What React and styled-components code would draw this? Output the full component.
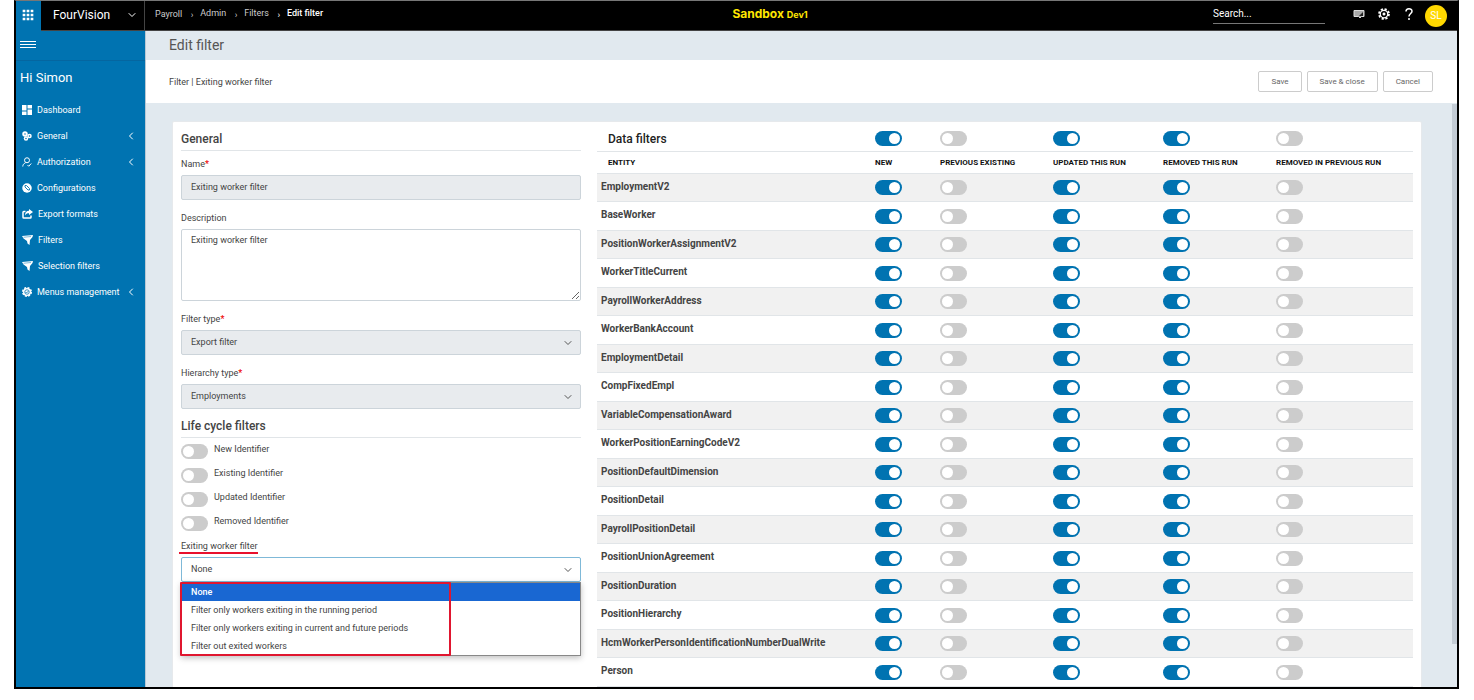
import React, { useState } from 'react'
import styled, { createGlobalStyle, css } from 'styled-components'
import { MdApps } from 'react-icons/md'
import { ChevronDown, ChevronLeft } from 'lucide-react'

const GlobalStyle = createGlobalStyle`
  * {
    box-sizing: border-box;
  }

  body {
    margin: 0;
    background: #fff;
    color: #444;
    font-family: Roboto, "Liberation Sans", sans-serif;
    font-size: 9px;
    line-height: 12px;
  }

  button, input, select, textarea {
    font: inherit;
    color: inherit;
  }
`

const Frame = styled.div`
  display: flex;
  flex-direction: column;
  height: calc(100vh - 11px);
  margin: 0 15px 0 14px;
  border: 2px solid #000;
  border-top: 1px solid #777;
  overflow: hidden;
`

const TopBar = styled.header`
  display: flex;
  flex: none;
  height: 30px;
  background: #000;
  color: #fff;
  border-bottom: 1px solid #444;
`

const AppLauncher = styled.button`
  display: flex;
  align-items: center;
  justify-content: center;
  width: 25px;
  height: 30px;
  padding: 0 2px 2px 0;
  border: 0;
  background: #0073b1;
  color: #fff;
`

const CompanyButton = styled.button`
  display: flex;
  align-items: center;
  justify-content: space-between;
  width: 104px;
  padding: 0 6px 2px 12px;
  border: 0;
  border-right: 1px solid #444;
  background: none;
  color: #fff;
  font-size: 12px;
`

const TopContent = styled.div`
  display: grid;
  grid-template-columns: 11fr 9fr auto;
  align-items: center;
  flex: 1;
`

const Crumbs = styled.nav`
  display: flex;
  align-items: center;
  padding: 0 0 3px 10px;
  color: #ccc;
`

const Crumb = styled.a`
  color: inherit;
  text-decoration: none;

  &[aria-current] {
    color: #fff;
    font-weight: 500;
  }

  & + &::before {
    content: '›';
    display: inline-block;
    width: 16px;
    padding-left: 2px;
    text-align: center;
    font-weight: 400;
    vertical-align: -2px;
  }
`

const Environment = styled.div`
  padding-bottom: 2px;
  color: #ffe600;
  font-family: Inter, sans-serif;
  font-size: 12px;
  font-weight: 700;

  small {
    font-size: 9px;
  }
`

const TopTools = styled.div`
  display: flex;
  align-items: center;
  padding-right: 10px;
`

const Search = styled.input`
  width: 112px;
  height: 18px;
  margin: 0 25px 2px 0;
  padding: 0 0 2px;
  border: 0;
  border-bottom: 1px solid #777;
  background: none;
  color: #fff;
  font-size: 10px;

  &::placeholder {
    color: #fff;
    opacity: 1;
  }
`

const ToolButton = styled.button`
  display: flex;
  align-items: center;
  justify-content: center;
  width: 18px;
  height: 18px;
  margin-right: 7px;
  padding: 0 0 3px;
  border: 0;
  background: none;
  color: #fff;
`

const Avatar = styled.div`
  width: 22px;
  height: 22px;
  border-radius: 50%;
  background: #ffd800;
  color: #fff;
  font-size: 10px;
  line-height: 22px;
  text-align: center;
`

const Body = styled.div`
  display: flex;
  flex: 1;
  min-height: 0;
`

const Sidebar = styled.aside`
  flex: none;
  width: 130px;
  background: #0073b1;
  border-right: 1px solid #b9c8d4;
  color: #fff;
`

const MenuToggle = styled.button`
  display: block;
  width: 100%;
  height: 30px;
  padding: 0 4px;
  border: 0;
  border-bottom: 1px solid #0566a0;
  background: none;
  color: #fff;
  text-align: left;
`

const Greeting = styled.div`
  padding: 9px 4px 11px;
  font-size: 13px;
  line-height: 16px;
`

const MenuLink = styled.a`
  display: flex;
  align-items: center;
  height: 26px;
  padding: 0 8px 0 6px;
  color: #fff;
  text-decoration: none;

  svg:first-child {
    flex: none;
    margin-right: 5px;
  }

  span {
    flex: 1;
    white-space: nowrap;
  }
`

const Main = styled.main`
  display: flex;
  flex-direction: column;
  flex: 1;
  min-width: 0;
`

const PageTitle = styled.h1`
  flex: none;
  margin: 0;
  padding: 0 23px;
  background: #e1e9ef;
  color: #555;
  font-size: 14px;
  font-weight: 400;
  line-height: 29px;
`

const ActionBar = styled.div`
  display: flex;
  align-items: center;
  flex: none;
  gap: 5px;
  height: 43px;
  padding: 0 24px 0 23px;
  background: #fff;
`

const RecordName = styled.div`
  flex: 1;
`

const ActionButton = styled.button`
  height: 21px;
  padding: 0 12px;
  border: 1px solid #ccc;
  border-radius: 2px;
  background: #fff;
  color: #666;
  font-size: 8px;
`

const Content = styled.div`
  display: flex;
  align-items: flex-start;
  flex: 1;
  min-height: 0;
  padding: 18px 0 0 26px;
  background: #e1e9ef;
  overflow: hidden;
`

const Card = styled.div`
  display: grid;
  grid-template-columns: 25fr 51fr;
  gap: 16px;
  flex: 1;
  padding: 0 8px;
  background: #fff;
  border: 1px solid #e6e9ec;
  border-radius: 2px 2px 0 0;
`

const ScrollTrack = styled.div`
  flex: none;
  width: 35px;
  height: 540px;
  margin-top: -17px;
  border-right: 5px solid #c3ccd5;
`

const Form = styled.form`
  min-width: 0;
`

const SectionTitle = styled.h2`
  height: 29px;
  margin: 0;
  padding-top: 9px;
  border-bottom: 1px solid #e1e5e8;
  font-size: 12px;
  font-weight: 500;
  line-height: 16px;
`

const Field = styled.div`
  position: relative;
  display: flex;
  flex-direction: column;
  align-items: flex-start;
  gap: 5px;
  padding-top: ${props => props.$top || '12px'};
`

const Label = styled.label`
  ${props => props.$marked && css`
    margin: 0 0 -2px -2px;
    padding-left: 2px;
    border-bottom: 2px solid #e8112d;
  `}

  b {
    color: #e00;
    font-weight: 500;
  }
`

const control = css`
  width: 100%;
  height: 25px;
  padding: 0 9px 2px;
  border: 1px solid #ccd4da;
  border-radius: 2px;
  background: #fff;
  color: #444;

  &:disabled {
    background: #e8ebee;
    opacity: 1;
  }
`

const TextInput = styled.input`
  ${control}
`

const TextArea = styled.textarea`
  ${control}
  display: block;
  height: 72px;
  padding: 4px 9px;
`

const SelectWrapper = styled.div`
  position: relative;
  width: 100%;

  svg {
    position: absolute;
    top: 7px;
    right: 7px;
    pointer-events: none;
  }
`

const Select = styled.select`
  ${control}
  display: block;
  appearance: none;
  border-color: ${props => props.$open ? '#7fb9d8' : '#ccd4da'};
`

const LifeCycle = styled.div`
  padding-top: 3px;
`

const LifeCycleRow = styled.label`
  display: flex;
  gap: 6px;
  height: 24px;
  padding-top: 1px;
  line-height: 14px;

  input {
    margin-top: 2px;
  }
`

const Toggle = styled.input`
  display: block;
  flex: none;
  appearance: none;
  width: 27px;
  height: 15px;
  margin: 0;
  padding: 2px;
  border-radius: 8px;
  background: #ccc;

  &::before {
    content: '';
    display: block;
    width: 11px;
    height: 11px;
    border-radius: 50%;
    background: #fff;
  }

  &:checked {
    background: #0073b1;
  }

  &:checked::before {
    margin-left: 12px;
  }
`

const Options = styled.ul`
  position: absolute;
  top: 100%;
  left: 0;
  right: 0;
  margin: 0;
  padding: 0;
  border: 1px solid #888;
  background: #fff;
  box-shadow: 0 2px 6px rgba(0, 0, 0, 0.25);
  list-style: none;
`

const Option = styled.li`
  height: 18px;
  padding: 0 9px;
  line-height: 18px;

  &[aria-selected='true'] {
    background: #1967d2;
    color: #fff;
    font-weight: 500;
  }
`

const Highlight = styled.div`
  position: absolute;
  inset: -1px auto -1px -2px;
  width: 68%;
  border: 2px solid #e0162f;
  border-radius: 1px;
  pointer-events: none;
`

const Table = styled.table`
  width: 100%;
  border-collapse: separate;
  border-spacing: 0;
  table-layout: fixed;

  th, td {
    padding: 0;
    border-bottom: 1px solid #e1e5e8;
    text-align: left;
    white-space: nowrap;
  }
`

const Col = styled.col`
  width: ${props => props.$width};
`

const TitleRow = styled.tr`
  height: 30px;

  th:first-child {
    padding: 4px 0 0 11px;
    color: #222;
    font-size: 12px;
    font-weight: 500;
  }

  input {
    margin-top: 3px;
  }
`

const HeadRow = styled.tr`
  height: 22px;
  color: #111;
  font-size: 8px;

  th {
    font-weight: 700;
  }

  th:first-child {
    padding-left: 11px;
  }
`

const EntityRow = styled.tr`
  height: 28px;

  &:nth-child(even) {
    height: 29px;
  }

  &:nth-child(odd) {
    background: #f1f1f1;
  }

  th {
    padding: 0 0 2px 4px;
    font-size: 10px;
    font-weight: 700;
  }
`

const DashboardIcon = () => (
    <svg width="10" height="10" viewBox="0 0 20 20" fill="#fff">
        <path d="M0 0h9v11H0zM0 13h9v7H0zM11 0h9v7h-9zM11 9h9v11h-9z" />
    </svg>
)

const GeneralIcon = () => (
    <svg width="10" height="10" viewBox="0 0 20 20" fill="#fff">
        <circle cx="6" cy="6" r="5.500" />
        <circle cx="15" cy="10" r="4.500" />
        <circle cx="8" cy="15" r="4.500" />
        <g fill="#0073b1">
            <circle cx="6" cy="6" r="1.500" />
            <circle cx="15" cy="10" r="1.500" />
            <circle cx="8" cy="15" r="1.500" />
        </g>
    </svg>
)

const AuthIcon = () => (
    <svg width="10" height="10" viewBox="0 0 20 20" fill="none" stroke="#fff" strokeWidth="2">
        <circle cx="10" cy="6.500" r="5" />
        <path d="M1.500 19c.3-3.500 2-6 5.500-7.500M11 16l2.500 2.500 5-5.500" />
    </svg>
)

const ConfigIcon = () => (
    <svg width="10" height="10" viewBox="0 0 20 20">
        <circle cx="10" cy="10" r="9.500" fill="#fff" />
        <path d="M6 5v3l6 6h3v-3L9 5z" fill="none" stroke="#0073b1" strokeWidth="1.800" />
    </svg>
)

const ExportIcon = () => (
    <svg width="11" height="10" viewBox="0 0 22 20">
        <path d="M7 5H3.500C2.500 5 2 5.500 2 6.500v10c0 1 .5 1.500 1.500 1.500h13c1 0 1.500-.5 1.500-1.500V13" fill="none" stroke="#fff" strokeWidth="3" />
        <path d="M14 0l8 6-8 6V8.500c-4 0-6 1-8 4.500 0-6 3-9.500 8-9.500z" fill="#fff" />
    </svg>
)

const FunnelIcon = () => (
    <svg width="11" height="10" viewBox="0 0 22 20" fill="#fff">
        <path d="M0 2l22-2-1 4-5 6-1 10-4-3-1-5-7-5z" />
        <path d="M3 4.500l15-1.500" stroke="#0073b1" strokeWidth="1" />
    </svg>
)

const MenusIcon = () => (
    <svg width="10" height="10" viewBox="0 0 20 20">
        <circle cx="10" cy="10" r="8.500" fill="none" stroke="#fff" strokeWidth="3" strokeDasharray="4 2.675" />
        <circle cx="10" cy="10" r="8" fill="#fff" />
        <circle cx="10" cy="10" r="4.500" fill="none" stroke="#0073b1" strokeWidth="1.500" />
        <path d="M7 10l2 2 4-4" fill="none" stroke="#0073b1" strokeWidth="1.500" />
    </svg>
)

const SettingsIcon = () => (
    <svg width="12" height="12" viewBox="0 0 24 24" fill="none" stroke="#fff">
        <circle cx="12" cy="12" r="10" strokeWidth="3.500" strokeDasharray="4.500 3.354" />
        <circle cx="12" cy="12" r="7.500" strokeWidth="2.500" />
        <circle cx="12" cy="12" r="2.500" fill="#fff" />
    </svg>
)

const HamburgerIcon = () => (
    <svg width="16" height="9" viewBox="0 0 16 9" stroke="#fff">
        <path d="M0 1.500h16M0 4.500h16M0 7.500h16" />
    </svg>
)

const MessageIcon = () => (
    <svg width="12" height="10" viewBox="0 0 12 10">
        <path d="M1 1.500h10v6H8.500L7 9 5.500 7.500H1z" fill="#aaa" stroke="#ddd" />
        <path d="M6 7l4-4v4z" fill="#222" />
    </svg>
)

const HelpIcon = () => (
    <svg width="10" height="14" viewBox="0 0 10 14" fill="none" stroke="#fff" strokeWidth="1.500">
        <path d="M2 4.500C2 .8 8 .8 8 4.300 8 6.500 5 6.700 5 9.500M5 11v2" />
    </svg>
)

const menu = [
    { label: 'Dashboard', icon: <DashboardIcon /> },
    { label: 'General', icon: <GeneralIcon />, nested: true },
    { label: 'Authorization', icon: <AuthIcon />, nested: true },
    { label: 'Configurations', icon: <ConfigIcon /> },
    { label: 'Export formats', icon: <ExportIcon /> },
    { label: 'Filters', icon: <FunnelIcon /> },
    { label: 'Selection filters', icon: <FunnelIcon /> },
    { label: 'Menus management', icon: <MenusIcon />, nested: true }
]

const lifeCycles = ['New Identifier', 'Existing Identifier', 'Updated Identifier', 'Removed Identifier']

const workerOptions = [
    'None',
    'Filter only workers exiting in the running period',
    'Filter only workers exiting in current and future periods',
    'Filter out exited workers'
]

const columns = [
    { label: 'NEW', width: '65px', on: true },
    { label: 'PREVIOUS EXISTING', width: '113px', on: false },
    { label: 'UPDATED THIS RUN', width: '110px', on: true },
    { label: 'REMOVED THIS RUN', width: '113px', on: true },
    { label: 'REMOVED IN PREVIOUS RUN', width: '137px', on: false }
]

const entities = [
    'EmploymentV2',
    'BaseWorker',
    'PositionWorkerAssignmentV2',
    'WorkerTitleCurrent',
    'PayrollWorkerAddress',
    'WorkerBankAccount',
    'EmploymentDetail',
    'CompFixedEmpl',
    'VariableCompensationAward',
    'WorkerPositionEarningCodeV2',
    'PositionDefaultDimension',
    'PositionDetail',
    'PayrollPositionDetail',
    'PositionUnionAgreement',
    'PositionDuration',
    'PositionHierarchy',
    'HcmWorkerPersonIdentificationNumberDualWrite',
    'Person'
]

const Switch = props => <Toggle type="checkbox" role="switch" {...props} />

const Header = () => (
    <TopBar>
        <AppLauncher aria-label="Apps"><MdApps size={16} /></AppLauncher>
        <CompanyButton>
            FourVision
            <ChevronDown size={12} strokeWidth={2} />
        </CompanyButton>
        <TopContent>
            <Crumbs>
                <Crumb href="#payroll">Payroll</Crumb>
                <Crumb href="#admin">Admin</Crumb>
                <Crumb href="#filters">Filters</Crumb>
                <Crumb href="#edit" aria-current="page">Edit filter</Crumb>
            </Crumbs>
            <Environment>Sandbox <small>Dev1</small></Environment>
            <TopTools>
                <Search type="search" placeholder="Search..." aria-label="Search" />
                <ToolButton aria-label="Messages"><MessageIcon /></ToolButton>
                <ToolButton aria-label="Settings"><SettingsIcon /></ToolButton>
                <ToolButton aria-label="Help"><HelpIcon /></ToolButton>
                <Avatar>SL</Avatar>
            </TopTools>
        </TopContent>
    </TopBar>
)

const SelectField = ({ id, label, options, disabled, open, marked, top }) => {
    const [value, setValue] = useState(options[0])

    return (
        <Field $top={top}>
            <Label htmlFor={id} $marked={marked}>{label}{disabled && <b>*</b>}</Label>
            <SelectWrapper>
                <Select id={id} value={value} disabled={disabled} $open={open} onChange={e => setValue(e.target.value)}>
                    {options.map(option => <option key={option}>{option}</option>)}
                </Select>
                <ChevronDown size={12} color="#555" />
                {open && (
                    <Options role="listbox" aria-label={label}>
                        {options.map(option => (
                            <Option key={option} role="option" aria-selected={option === value} onClick={() => setValue(option)}>
                                {option}
                            </Option>
                        ))}
                        <Highlight />
                    </Options>
                )}
            </SelectWrapper>
        </Field>
    )
}

const FilterForm = () => (
    <Form>
        <SectionTitle>General</SectionTitle>
        <Field $top="7px">
            <Label htmlFor="name">Name<b>*</b></Label>
            <TextInput id="name" defaultValue="Exiting worker filter" disabled />
        </Field>
        <Field>
            <Label htmlFor="description">Description</Label>
            <TextArea id="description" defaultValue="Exiting worker filter" />
        </Field>
        <SelectField id="filterType" label="Filter type" options={['Export filter']} disabled />
        <SelectField id="hierarchyType" label="Hierarchy type" options={['Employments']} disabled />
        <SectionTitle>Life cycle filters</SectionTitle>
        <LifeCycle>
            {lifeCycles.map(name => (
                <LifeCycleRow key={name}>
                    <Switch />
                    {name}
                </LifeCycleRow>
            ))}
        </LifeCycle>
        <SelectField id="exitingFilter" label="Exiting worker filter" options={workerOptions} open marked top="3px" />
    </Form>
)

const DataFilters = () => (
    <Table>
        <colgroup>
            <col />
            {columns.map(column => <Col key={column.label} $width={column.width} />)}
        </colgroup>
        <thead>
            <TitleRow>
                <th>Data filters</th>
                {columns.map(column => (
                    <th key={column.label}><Switch defaultChecked={column.on} aria-label={`All ${column.label}`} /></th>
                ))}
            </TitleRow>
            <HeadRow>
                <th scope="col">ENTITY</th>
                {columns.map(column => <th key={column.label} scope="col">{column.label}</th>)}
            </HeadRow>
        </thead>
        <tbody>
            {[...entities, ''].map(entity => (
                <EntityRow key={entity}>
                    <th scope="row">{entity}</th>
                    {columns.map(column => (
                        <td key={column.label}>
                            {entity && <Switch defaultChecked={column.on} aria-label={`${entity} ${column.label}`} />}
                        </td>
                    ))}
                </EntityRow>
            ))}
        </tbody>
    </Table>
)

const App = () => (
    <>
        <GlobalStyle />
        <Frame>
            <Header />
            <Body>
                <Sidebar>
                    <MenuToggle aria-label="Toggle menu"><HamburgerIcon /></MenuToggle>
                    <Greeting>Hi Simon</Greeting>
                    <nav>
                        {menu.map(item => (
                            <MenuLink key={item.label} href="#menu">
                                {item.icon}
                                <span>{item.label}</span>
                                {item.nested && <ChevronLeft size={12} />}
                            </MenuLink>
                        ))}
                    </nav>
                </Sidebar>
                <Main>
                    <PageTitle>Edit filter</PageTitle>
                    <ActionBar>
                        <RecordName>Filter | Exiting worker filter</RecordName>
                        <ActionButton>Save</ActionButton>
                        <ActionButton>Save &amp; close</ActionButton>
                        <ActionButton>Cancel</ActionButton>
                    </ActionBar>
                    <Content>
                        <Card>
                            <FilterForm />
                            <DataFilters />
                        </Card>
                        <ScrollTrack />
                    </Content>
                </Main>
            </Body>
        </Frame>
    </>
)

export default App
